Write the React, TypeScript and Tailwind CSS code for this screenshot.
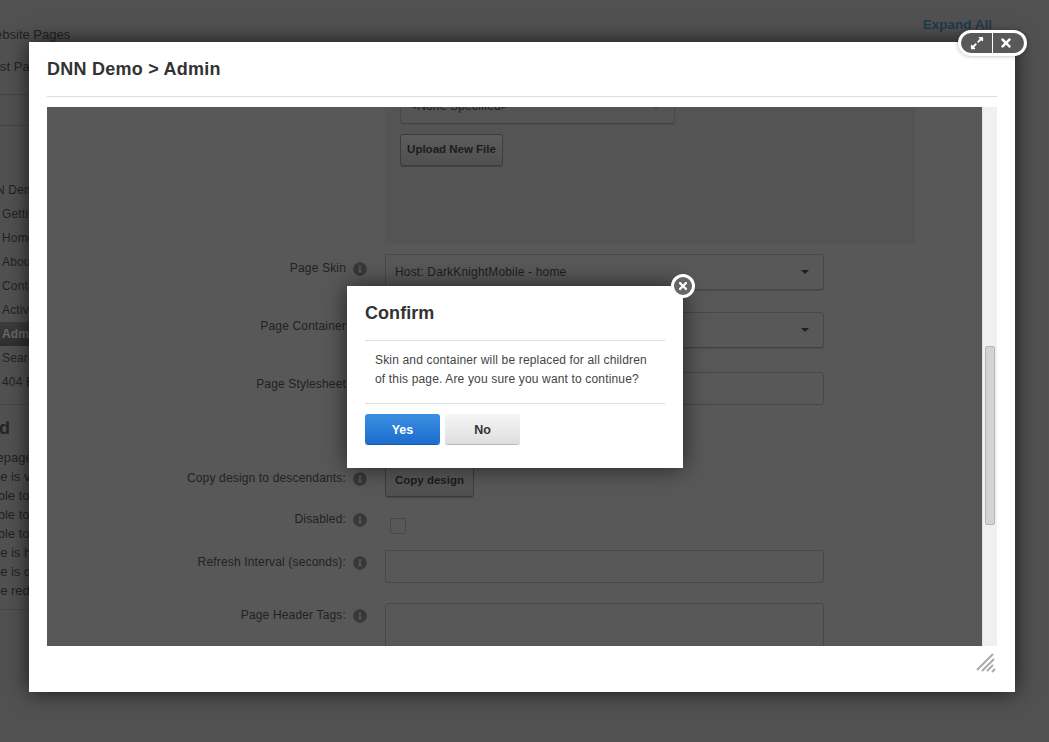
import React from "react";
import { FaExpandAlt, FaInfoCircle, FaTimes } from "react-icons/fa";

const navItems = ["N Demo", "Getting", "Home", "About", "Contact", "Activity", "Admin", "Search", "404 Error"];
const helpLines = [
  { text: "Homepage", offset: "-ml-[31px]" },
  { text: "Page is visible", offset: "-ml-[23px]" },
  { text: "Able to view", offset: "-ml-[11px]" },
  { text: "Able to edit", offset: "-ml-[11px]" },
  { text: "Able to add", offset: "-ml-[11px]" },
  { text: "Page is hidden", offset: "-ml-[23px]" },
  { text: "Page is disabled", offset: "-ml-[23px]" },
  { text: "Page redirects", offset: "-ml-[23px]" },
];

function Info({ top }: { top: string }) {
  return (
    <div className={`ml-[7px] w-[14px] shrink-0 text-[#383838] ${top}`}>
      <FaInfoCircle size={14} />
    </div>
  );
}

function Chevron() {
  return <span className="ml-auto h-0 w-0 border-x-[4px] border-t-[4px] border-x-transparent border-t-[#1e1e1e]" />;
}

function Select({ label }: { label?: string }) {
  return (
    <div className="flex h-9 w-full items-center rounded-[3px] border border-[#484848] border-b-[#444444] px-[9px] pr-[14px] text-xs text-[#1d1d1d] shadow-[0_1px_0_#4e4e4e]">
      <span>{label}</span>
      <Chevron />
    </div>
  );
}

function Sidebar() {
  return (
    <div className="flex w-[190px] flex-col text-[#222222]">
      <div className="mt-[26px] -ml-[17px] text-[13px] leading-[18px]">Website Pages</div>
      <div className="mt-[14px] -ml-[17px] text-[13px] leading-[18px] tracking-[0.1px]">Host Pages</div>
      <div className="mt-[18px] h-8 border-y border-[#444444]" />
      <div className="mt-[52px] flex flex-col tracking-[0.16px]">
        {navItems.map((item, i) => (
          <div
            key={item}
            className={
              i === 6
                ? "flex h-[24px] items-center bg-gradient-to-b from-[#3d3d3d] to-[#2f2f2f] pl-[2px] text-xs font-bold text-[#686868]"
                : i === 0
                  ? "-ml-[4px] flex h-[24px] items-center text-xs"
                  : "flex h-[24px] items-center pl-[2px] text-xs"
            }
          >
            {item}
          </div>
        ))}
      </div>
      <div className="mt-[10px] border-t border-[#464646] pt-[11px]">
        <div className="-ml-[54px] text-lg leading-6 font-bold whitespace-nowrap text-[#262626]">Legend</div>
      </div>
      <div className="mt-[8px] flex flex-col border-b border-[#464646] pb-[9px]">
        {helpLines.map((line) => (
          <div key={line.text} className={`${line.offset} text-[13px] leading-[19px] whitespace-nowrap`}>
            {line.text}
          </div>
        ))}
      </div>
    </div>
  );
}

function FormArea() {
  return (
    <div className="relative flex min-w-0 flex-1 flex-col overflow-hidden bg-[#585858] text-xs tracking-[0.16px] text-[#222222]">
      {/* Uploaded file panel */}
      <div className="ml-[338px] h-[137px] w-[530px] shrink-0 overflow-hidden bg-[#545454] px-[15px]">
        <div className="-mt-[19px] w-[275px]">
          <Select label="<None Specified>" />
        </div>
        <div className="mt-[10px] flex h-8 w-[103px] items-center justify-center rounded-[3px] border border-[#3c3c3c] bg-gradient-to-b from-[#5c5c5c] to-[#505050] text-[11.5px] font-bold tracking-normal text-[#1c1c1c] shadow-[0_1px_0_#444444]">
          Upload New File
        </div>
      </div>

      <div className="mt-[10px] flex shrink-0">
        <div className="w-[299px] pt-[5px] text-right leading-[18px]">Page Skin</div>
        <Info top="pt-[8px]" />
        <div className="ml-[18px] w-[439px]">
          <Select label="Host: DarkKnightMobile - home" />
        </div>
      </div>

      <div className="mt-[22px] flex shrink-0">
        <div className="w-[299px] pt-[5px] text-right leading-[18px]">Page Container</div>
        <Info top="pt-[8px]" />
        <div className="ml-[18px] w-[439px]">
          <Select label="Host: DarkKnightMobile - Main" />
        </div>
      </div>

      <div className="mt-[24px] flex shrink-0">
        <div className="w-[299px] pt-[3px] text-right leading-[18px]">Page Stylesheet</div>
        <Info top="pt-[6px]" />
        <div className="ml-[18px] h-[33px] w-[439px] rounded-[3px] border border-[#484848]" />
      </div>

      <div className="mt-[59px] flex shrink-0">
        <div className="w-[299px] pt-[5px] text-right leading-[18px]">Copy design to descendants:</div>
        <Info top="pt-[8px]" />
        <div className="ml-[18px] flex h-[33px] w-[89px] items-center justify-center rounded-[3px] border border-[#3c3c3c] bg-gradient-to-b from-[#5c5c5c] to-[#505050] text-[11.5px] font-bold tracking-normal text-[#1c1c1c] shadow-[0_1px_0_#444444]">
          Copy design
        </div>
      </div>

      <div className="mt-[13px] flex shrink-0">
        <div className="w-[299px] text-right leading-[18px]">Disabled:</div>
        <Info top="pt-[3px]" />
        <div className="mt-[8px] ml-[23px] h-4 w-4 rounded-[2px] border border-[#484848]" />
      </div>

      <div className="mt-[16px] flex shrink-0">
        <div className="w-[299px] pt-[3px] text-right leading-[18px]">Refresh Interval (seconds):</div>
        <Info top="pt-[6px]" />
        <div className="ml-[18px] h-[33px] w-[439px] rounded-[3px] border border-[#484848]" />
      </div>

      <div className="mt-[20px] flex shrink-0">
        <div className="w-[299px] pt-[3px] text-right leading-[18px]">Page Header Tags:</div>
        <Info top="pt-[6px]" />
        <div className="ml-[18px] h-[70px] w-[439px] rounded-[3px] border border-[#484848]" />
      </div>
    </div>
  );
}

function ConfirmDialog() {
  return (
    <div className="absolute top-[286px] left-[347px] z-30 w-[336px] bg-white px-[18px] pt-[16px] pb-[23px] shadow-[0_0_22px_rgba(0,0,0,0.6)]">
      <div className="absolute -top-[12px] -right-[12px] flex h-6 w-6 items-center justify-center rounded-full border-[3px] border-white bg-[#666666] text-white">
        <FaTimes size={12} />
      </div>
      <div className="border-b border-[#dddddd] pb-[15px] text-lg leading-[23px] font-bold tracking-[0.05px] text-[#333333]">
        Confirm
      </div>
      <div className="border-b border-[#dddddd] px-[10px] pt-[10px] pb-[14px] text-xs leading-[19px] tracking-[0.16px] text-[#444444]">
        Skin and container will be replaced for all children
        <br />
        of this page. Are you sure you want to continue?
      </div>
      <div className="mt-[10px] mb-[1px] flex gap-[5px] text-[12.5px] font-bold">
        <div className="flex h-[30px] w-[75px] items-center justify-center rounded-[3px] bg-gradient-to-b from-[#3d8fe2] to-[#1c6dcd] pt-[2px] text-white shadow-[0_1px_0_#1a5ba8]">
          Yes
        </div>
        <div className="flex h-[30px] w-[75px] items-center justify-center rounded-[3px] bg-gradient-to-b from-[#f6f6f6] to-[#dedede] pt-[2px] text-[#333333] shadow-[0_1px_0_#b8b8b8]">
          No
        </div>
      </div>
    </div>
  );
}

export default function App() {
  return (
    <div className="relative h-[742px] w-[1049px] overflow-hidden bg-[#515151] [font-family:'Liberation_Sans',Arial,sans-serif]">
      {/* Dimmed page behind the popup */}
      <div className="flex h-full">
        <Sidebar />
        <div className="flex flex-1 justify-end pt-[17px] pr-[57px]">
          <span className="text-[13.5px] leading-4 font-bold text-[#1e3a4d]">Expand All</span>
        </div>
      </div>

      {/* Popup */}
      <div className="absolute top-[42px] left-[29px] z-10 flex h-[650px] w-[986px] flex-col bg-white px-[18px] shadow-[0_0_20px_rgba(0,0,0,0.7)]">
        <div className="h-[55px] shrink-0 border-b border-[#dddddd] pt-[15px] text-lg leading-6 font-bold tracking-[0.25px] text-[#333333]">
          DNN Demo &gt; Admin
        </div>
        <div className="mt-[10px] flex h-[539px] shrink-0">
          <FormArea />
          <div className="w-[15px] shrink-0 border-l border-[#e2e2e2] bg-[#f0f0f0] px-[2px] pt-[239px]">
            <div className="h-[179px] rounded-[2px] border border-[#b4b4b4] bg-[#d3d3d3]" />
          </div>
        </div>
        <div className="flex flex-1 items-start justify-end pt-[7px]">
          <svg width="21" height="21" viewBox="0 0 21 21" stroke="#aaaaaa" strokeWidth="2">
            <path d="M1 17 L17 1" />
            <path d="M6 18 L18 6" />
            <path d="M11 18 L17 12" />
            <path d="M16 19 L19 16" />
          </svg>
        </div>

        {/* Popup controls */}
        <div className="absolute -top-[12px] -right-[12px] flex h-[26px] w-[69px] items-center rounded-full border-[3px] border-white bg-[#595959] text-white shadow-[0_0_4px_rgba(0,0,0,0.3)]">
          <div className="flex h-full w-[32px] items-center justify-center border-r border-white">
            <FaExpandAlt size={14} />
          </div>
          <div className="flex h-full flex-1 items-center justify-center pr-[5px]">
            <FaTimes size={14} />
          </div>
        </div>
      </div>

      <ConfirmDialog />
    </div>
  );
}
